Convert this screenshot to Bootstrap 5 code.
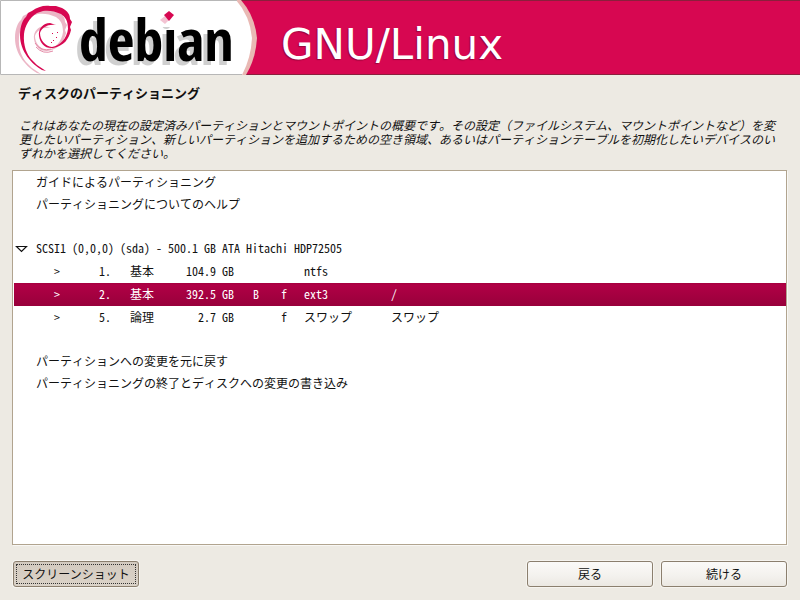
<!DOCTYPE html>
<html lang="ja">
<head>
<meta charset="utf-8">
<meta name="viewport" content="width=device-width, initial-scale=1">
<title>ディスクのパーティショニング</title>
<link rel="stylesheet" href="https://cdn.jsdelivr.net/npm/bootstrap@5.3.0/dist/css/bootstrap.min.css">
<style>
body {
  background: #edeae3;
  color: #111;
  font: 12px/14px "Noto Sans CJK JP", sans-serif;
  font-feature-settings: "hwid";
  font-kerning: none;
}
.banner {
  background: #d70751;
  border-top: 1px solid #8a1f3c;
  border-bottom: 1px solid #8a1f3c;
  height: 75px;
}
.banner svg { display: block; margin: -1px 0; overflow: visible; }
.product {
  color: #fff;
  font: 42px/50px "DejaVu Sans", sans-serif;
  text-shadow: -1px 1px 1px #98063b;
  padding: 19px 0 0 11px;
}
.brand-word {
  font: bold 58px "Open Sans Condensed", "Noto Sans Condensed", "Roboto Condensed", Roboto, sans-serif;
  filter: drop-shadow(-4px 4px 0 #cfcfcf);
}
.page { padding: 10px 13px 13px 12px; }
.heading { font-size: 13px; line-height: 16px; font-weight: 700; padding-left: 6px; }
.intro { font-style: italic; font-feature-settings: normal; padding: 0 8px 0 7px; margin: 17px 0 10px; }
.listing {
  background: #fff;
  border: 1px solid #b1a48f;
  padding: 1px 0 1px 1px;
  box-shadow: 1px 1px 0 #f8f7f4;
}
.parts { table-layout: fixed; border-collapse: collapse; line-height: 20px; }
.parts td { height: 22px; padding: 0 0 2px; white-space: pre; }
.parts .volume td { height: 23px; padding-bottom: 1px; }
.parts .chosen { background: linear-gradient(#a5003f, #b00045 10%, #98003b); color: #fff; }
.c-toggle { width: 22px; } .c-mark { width: 42px; } .c-num { width: 33px; }
.c-kind { width: 63px; } .c-size { width: 60px; } .c-boot { width: 44px; }
.c-use { width: 12px; } .c-fs { width: 101px; }
.parts td.kind { padding-left: 19px; }
.parts td.fs { padding-left: 14px; }
.toggle { display: block; border: 0; background: none; padding: 2px 0 0 1px; }
.toggle svg { display: block; }
.actions { padding: 16px 0 0 1px; }
.btn-gtk {
  width: 126px;
  height: 26px;
  padding: 0;
  border: 1px solid #8b7f6e;
  border-radius: 3px;
  font-size: 12px;
  line-height: 22px;
  color: #111;
  background: linear-gradient(#fbfaf8, #f3f1ed 60%, #ebe8e2);
  box-shadow: 0 0 0 1px #f6f4ef;
}
.btn-gtk:hover { border-color: #6f6455; color: #111; }
.btn-held { background: linear-gradient(#d3cabf, #dbd3c8); }
.btn-held:hover { background: #d8d0c5; }
.btn-held span { display: block; margin: 2px; line-height: 18px; border: 1px dotted #333; }
</style>
<script src="https://cdn.jsdelivr.net/npm/bootstrap@5.3.0/dist/js/bootstrap.bundle.min.js"></script>
</head>
<body class="d-flex flex-column min-vh-100">
<header class="banner d-flex">
  <svg width="270" height="75" viewBox="0 0 270 75" role="img" aria-label="debian">
    <path d="M0 0H241Q255 16 257 38Q256 58 246 75H0Z" fill="#e9b9b4"/>
    <path d="M0 0H236Q250 16 252 38Q251 58 242 75H0Z" fill="#fff"/>
    <path d="M.5 74.5V.5H237M.5 74.5H242" fill="none" stroke="#b7b7b7"/>
    <defs>
      <path id="swirl" d="M46 71L42 70C32 64 20 52 20 35C20 26 23 19 26 17L28 13L32 11C37 7 44 5 50 6L56 6L62 8C68 11 70 15 70 19L72 22L70 27L71 30C69 39 64 46 53 48C45 49 40 43 39 36C38 29 43 23 50 23L56 25C48 24 42 27 40 33C40 40 45 46 52 47C60 46 67 38 68 29C68 20 65 17 61 14C55 11 48 10 43 11L37 13C29 18 25 26 24 34C23 46 27 54 31 59L37 65Z"/>
    </defs>
    <use href="#swirl" x="-5" y="3" fill="#ecb6c6"/>
    <path d="M36 47Q43 55 53 51M35 43Q41 52 51 49" fill="none" stroke="#e58ba8"/>
    <use href="#swirl" fill="#d70751"/>
    <path d="M52 33h1v1h-1zM57 32h1v1h-1zM53 40h1v1h-1zM56 37h1v1h-1zM51 42h1v1h-1z" fill="#d70751"/>
    <text class="brand-word" x="79" y="61">debian</text>
    <path d="M157 8H179V27H157Z" fill="#fff"/>
    <path d="M165 16L169 20L165 24L160 20Z" fill="#f3c3d2"/>
    <path d="M169 11L174 15L169 21L164 15Z" fill="#d70751"/>
  </svg>
  <div class="product">GNU/Linux</div>
</header>
<main class="page flex-grow-1 d-flex flex-column">
  <h1 class="heading mb-0">ディスクのパーティショニング</h1>
  <p class="intro">これはあなたの現在の設定済みパーティションとマウントポイントの概要です。その設定（ファイルシステム、マウントポイントなど）を変更したいパーティション、新しいパーティションを追加するための空き領域、あるいはパーティションテーブルを初期化したいデバイスのいずれかを選択してください。</p>
  <div class="listing flex-grow-1">
    <table class="parts w-100">
      <colgroup>
        <col class="c-toggle"><col class="c-mark"><col class="c-num"><col class="c-kind"><col class="c-size"><col class="c-boot"><col class="c-use"><col class="c-fs"><col>
      </colgroup>
      <tbody>
        <tr><td></td><td colspan="8">ガイドによるパーティショニング</td></tr>
        <tr><td></td><td colspan="8">パーティショニングについてのヘルプ</td></tr>
        <tr><td colspan="9"></td></tr>
        <tr>
          <td><button type="button" class="toggle" aria-label="SCSI1" aria-expanded="true"><svg width="13" height="10" viewBox="0 0 13 10"><path d="M1.5 2.5H11.5L6.5 7.5Z" fill="#fff" stroke="#111" stroke-width="1.2"/></svg></button></td>
          <td colspan="8">SCSI1 (0,0,0) (sda) - 500.1 GB ATA Hitachi HDP72505</td>
        </tr>
        <tr class="volume"><td></td><td class="text-center">&gt;</td><td class="text-end">1.</td><td class="kind">基本</td><td class="text-end">104.9 GB</td><td></td><td></td><td class="fs">ntfs</td><td></td></tr>
        <tr class="volume chosen" aria-selected="true"><td></td><td class="text-center">&gt;</td><td class="text-end">2.</td><td class="kind">基本</td><td class="text-end">392.5 GB</td><td class="text-center">B</td><td class="text-center">f</td><td class="fs">ext3</td><td>/</td></tr>
        <tr class="volume"><td></td><td class="text-center">&gt;</td><td class="text-end">5.</td><td class="kind">論理</td><td class="text-end">2.7 GB</td><td></td><td class="text-center">f</td><td class="fs">スワップ</td><td>スワップ</td></tr>
        <tr><td colspan="9"></td></tr>
        <tr><td></td><td colspan="8">パーティションへの変更を元に戻す</td></tr>
        <tr><td></td><td colspan="8">パーティショニングの終了とディスクへの変更の書き込み</td></tr>
      </tbody>
    </table>
  </div>
  <div class="actions d-flex gap-2">
    <button type="button" class="btn btn-gtk btn-held me-auto"><span>スクリーンショット</span></button>
    <button type="button" class="btn btn-gtk">戻る</button>
    <button type="button" class="btn btn-gtk">続ける</button>
  </div>
</main>
</body>
</html>
